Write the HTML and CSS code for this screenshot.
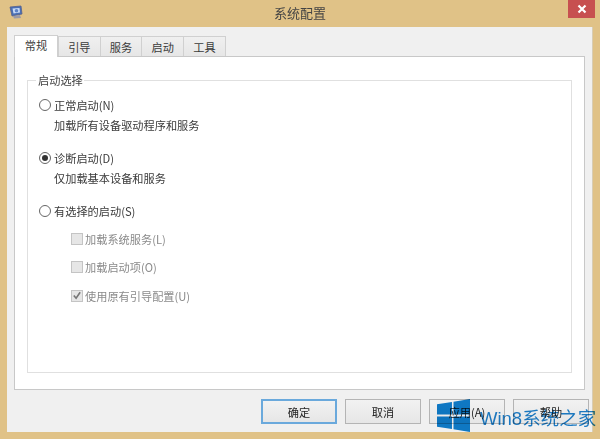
FILE: index.html
```html
<!DOCTYPE html>
<html lang="zh">
<head>
<meta charset="utf-8">
<title>系统配置</title>
<link rel="stylesheet" href="styles.css">
</head>
<body>
<div class="window">
  <header class="titlebar">
    <svg class="app-icon" width="14" height="14" viewBox="0 0 14 14">
      <path d="M1 2 L12 1 L13 9 L3 11 Z" fill="#4a6fb5" stroke="#55608a" stroke-width="0.8"/>
      <path d="M3.5 3.5 L10.5 3 L11 7.5 L4.5 8.5 Z" fill="#c8daf5"/>
      <circle cx="7.5" cy="5.8" r="1.8" fill="#5d83c8"/>
      <path d="M4 11 L11 10 L12 13 L5 13.5 Z" fill="#9a9aa8"/>
    </svg>
    <h1 class="title">系统配置</h1>
    <div class="close"><svg width="10" height="10" viewBox="0 0 10 10"><path d="M1.5 1.5 L8.5 8.5 M8.5 1.5 L1.5 8.5" stroke="#fff" stroke-width="2.2"/></svg></div>
  </header>
  <main class="client">
    <nav class="tabs">
      <div class="tab active">常规</div>
      <div class="tab">引导</div>
      <div class="tab">服务</div>
      <div class="tab">启动</div>
      <div class="tab">工具</div>
    </nav>
    <section class="panel">
      <fieldset class="group">
        <legend class="legend">启动选择</legend>
        <div class="option">
          <div class="radio-line"><span class="radio"></span>正常启动(N)</div>
          <div class="desc">加载所有设备驱动程序和服务</div>
        </div>
        <div class="option">
          <div class="radio-line"><span class="radio checked"></span>诊断启动(D)</div>
          <div class="desc">仅加载基本设备和服务</div>
        </div>
        <div class="option">
          <div class="radio-line"><span class="radio"></span>有选择的启动(S)</div>
          <div class="checks">
            <div class="check-line"><span class="check"></span>加载系统服务(L)</div>
            <div class="check-line"><span class="check"></span>加载启动项(O)</div>
            <div class="check-line"><span class="check"><svg width="11" height="11" viewBox="0 0 11 11"><path d="M2 5.5 L4.5 8.5 L9 2" fill="none" stroke="#777" stroke-width="1.8"/></svg></span>使用原有引导配置(U)</div>
          </div>
        </div>
      </fieldset>
    </section>
    <footer class="buttons">
      <div class="btn default">确定</div>
      <div class="btn">取消</div>
      <div class="btn">应用(A)</div>
      <div class="btn">帮助</div>
    </footer>
  </main>
</div>
<div class="watermark">
  <svg width="33" height="33" viewBox="0 0 32 32"><path d="M0 5 L14.5 3 V15 H0 Z M16 2.7 L32 0 V15 H16 Z M0 17 H14.5 V29 L0 27 Z M16 17 H32 V32 L16 29.3 Z" fill="#0f7fd0"/></svg>
  <span class="wm-text">Win8系统之家</span>
</div>
</body>
</html>
```
FILE: styles.css
```css
* { box-sizing: border-box; }
html, body { margin: 0; padding: 0; }
body {
  width: 600px;
  height: 439px;
  overflow: hidden;
  position: relative;
  background: #e0c287;
  font-family: "Noto Sans CJK SC", "Liberation Sans", sans-serif;
  font-size: 11.2px;
  color: #3a3a3a;
}
.window { display: flex; flex-direction: column; height: 100%; }
.titlebar { height: 27px; display: flex; align-items: center; justify-content: center; position: relative; }
.app-icon { position: absolute; left: 9px; top: 5px; }
.title { margin: 0 0 2px; font-size: 13px; font-weight: 400; color: #444; }
.close {
  position: absolute; right: 5px; top: 0; width: 27px; height: 18px;
  background: #c75050; display: flex; align-items: center; justify-content: center;
}
.client {
  margin: 0 7px 7px;
  flex: 1;
  background: #f0f0f0;
  border-right: 1px solid #d8cdb4;
  padding: 8px 7px;
  display: flex;
  flex-direction: column;
}
.tabs { display: flex; height: 21px; align-items: flex-end; position: relative; z-index: 1; }
.tab {
  width: 42.7px; height: 20px;
  background: linear-gradient(#f0f0f0, #e6e6e6);
  border: 1px solid #d0d0d0; border-bottom: 0; margin-left: -1px;
  display: flex; align-items: center; justify-content: center;
  color: #3a3a3a;
}
.tab.active {
  width: 44px; height: 22px; margin-left: 0; background: #fff;
  border-color: #cfcfcf; margin-bottom: -1px; padding-bottom: 3px; margin-right: 1px;
}
.panel { flex: 1; background: #fff; border: 1px solid #c8c8c8; padding: 16px 12px 16px 12px; }
.group { height: 100%; margin: 0; padding: 0 0 0 11px; border: 1px solid #e0e0e0; }
.legend { padding: 0 1px 0 2px; margin-left: -3px; line-height: 14px; color: #444; }
.option { margin-bottom: 13px; }
.option:first-of-type { margin-top: 8px; }
.radio-line { display: flex; align-items: center; height: 19px; gap: 3px; }
.radio {
  width: 12px; height: 12px; border-radius: 50%; border: 1px solid #666; background: #fff;
  display: flex; align-items: center; justify-content: center; flex: none;
}
.radio.checked::after { content: ""; width: 6px; height: 6px; border-radius: 50%; background: #333; }
.desc { margin: 2px 0 0 15px; line-height: 19px; }
.checks { margin: 0 0 0 32px; padding-top: 9px; display: flex; flex-direction: column; gap: 9.5px; color: #8a8a8a; }
.check-line { display: flex; align-items: center; gap: 2px; height: 19px; }
.check {
  width: 12px; height: 12px; background: #e6e6e6; border: 1px solid #c4c4c4; flex: none;
  display: flex; align-items: center; justify-content: center;
}
.buttons { display: flex; justify-content: flex-end; gap: 8px; padding: 9px 0 0; margin-right: -4px; height: 34px; }
.btn {
  width: 76px; height: 25px; background: linear-gradient(#f2f2f2, #e6e6e6); border: 1px solid #b4b4b4;
  display: flex; align-items: center; justify-content: center; color: #222;
}
.btn.default { border: 2px solid #6aa9dc; }
.watermark {
  position: absolute; left: 437px; top: 399px; display: flex; align-items: center; gap: 10px; height: 33px;
  mix-blend-mode: multiply;
}
.wm-text { font-family: "Liberation Sans", "Noto Sans CJK SC", sans-serif; font-size: 18.5px; color: #1f82cf; white-space: nowrap; position: relative; top: 1px; }
```
